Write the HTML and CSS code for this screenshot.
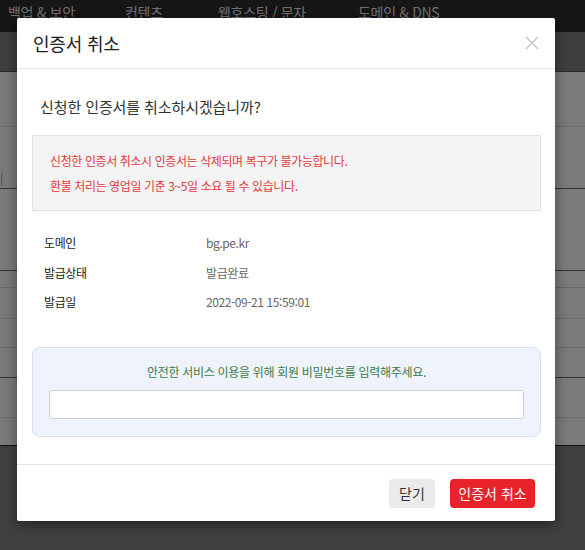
FILE: index.html
```html
<!DOCTYPE html>
<html lang="ko">
<head>
<meta charset="utf-8">
<title>인증서 취소</title>
<link rel="stylesheet" href="styles.css">
</head>
<body>
<div class="page">
  <nav class="topnav">
    <span class="nav-item n1">백업 &amp; 보안</span>
    <span class="nav-item n2">컨텐츠</span>
    <span class="nav-item n3">웹호스팅 / 문자</span>
    <span class="nav-item n4">도메인 &amp; DNS</span>
  </nav>
  <div class="subbar"></div>
  <div class="content">
    <div class="row r1"></div>
    <div class="row r2"><span class="pipe">|</span></div>
    <div class="row r3"></div>
    <div class="row r4"></div>
    <div class="row r5"></div>
    <div class="row r6"></div>
    <div class="row r7"></div>
    <div class="row r8"></div>
    <div class="row r9"></div>
  </div>
  <div class="footer-bg"></div>
</div>
<div class="backdrop"></div>
<div class="modal">
  <div class="modal-header">
    <h2 class="modal-title">인증서 취소</h2>
    <svg class="close" width="14" height="14" viewBox="0 0 14 14"><path d="M1 1L13 13M13 1L1 13" stroke="#c4c4c4" stroke-width="1.4" fill="none"/></svg>
  </div>
  <div class="modal-body">
    <p class="question">신청한 인증서를 취소하시겠습니까?</p>
    <div class="notice">
      <p>신청한 인증서 취소시 인증서는 삭제되며 복구가 불가능합니다.</p>
      <p>환불 처리는 영업일 기준 3~5일 소요 될 수 있습니다.</p>
    </div>
    <div class="info">
      <div class="info-row"><span class="label">도메인</span><span class="value">bg.pe.kr</span></div>
      <div class="info-row"><span class="label">발급상태</span><span class="value">발급완료</span></div>
      <div class="info-row"><span class="label">발급일</span><span class="value">2022-09-21 15:59:01</span></div>
    </div>
    <div class="pw-box">
      <p class="pw-text">안전한 서비스 이용을 위해 회원 비밀번호를 입력해주세요.</p>
      <input class="pw-input" type="password">
    </div>
  </div>
  <div class="modal-footer">
    <button class="btn btn-close">닫기</button>
    <button class="btn btn-danger">인증서 취소</button>
  </div>
</div>
</body>
</html>
```

FILE: styles.css
```css
* { box-sizing: border-box; }
html, body { margin: 0; padding: 0; }
body {
  width: 585px;
  height: 550px;
  overflow: hidden;
  position: relative;
  font-family: "Noto Sans CJK KR", "Noto Sans", sans-serif;
  background: #808080;
}
.page { display: flex; flex-direction: column; height: 550px; }
.topnav {
  height: 32px;
  background: #2c2c2c;
  position: relative;
  flex: none;
}
.nav-item {
  position: absolute;
  top: 0;
  font-size: 14px;
  line-height: 24px;
  color: #e0e0e0;
  letter-spacing: -0.3px;
}
.n1 { left: 8px; }
.n2 { left: 125px; }
.n3 { left: 218px; }
.n4 { left: 358px; }
.subbar {
  height: 40px;
  background: #7c7c7c;
  border-bottom: 1px solid #555;
  flex: none;
}
.content { background: #f6f6f6; flex: none; }
.row { border-bottom: 1px solid #d4d4d4; position: relative; }
.r1 { height: 55px; }
.r2 { height: 62px; border-bottom-color: #666; }
.r3 { height: 82px; border-bottom-color: #666; }
.r4 { height: 17px; }
.r5 { height: 31px; }
.r6 { height: 29px; }
.r7 { height: 30px; border-bottom-color: #666; }
.r8 { height: 40px; }
.r9 { height: 28px; border-bottom-color: #222; }
.pipe { position: absolute; left: 0; top: 42px; font-size: 12px; color: #999; }
.footer-bg { flex: 1; background: #808080; }
.backdrop {
  position: absolute;
  inset: 0;
  background: rgba(0, 0, 0, 0.5);
}
.modal {
  position: absolute;
  left: 17px;
  top: 18px;
  width: 538px;
  background: #fff;
  border-radius: 2px;
  box-shadow: 0 4px 14px rgba(0, 0, 0, 0.45);
}
.modal-header {
  height: 51px;
  padding: 0 16px;
  display: flex;
  align-items: center;
  justify-content: space-between;
  border-bottom: 1px solid #e5e5e5;
}
.modal-title {
  margin: 0;
  font-size: 18px;
  font-weight: 400;
  color: #222;
  line-height: 28px;
  letter-spacing: -0.2px;
}
.close { margin-right: 0; }
.modal-body { padding: 26px 14px 27px 15px; }
.question {
  margin: 0 0 16px 8px;
  font-size: 15px;
  line-height: 24px;
  color: #333;
  letter-spacing: -0.1px;
}
.notice {
  background: #f4f4f4;
  border: 1px solid #e3e3e3;
  padding: 12px 17px;
}
.notice p {
  margin: 0;
  font-size: 12px;
  line-height: 25px;
  color: #e8383d;
  letter-spacing: -0.4px;
}
.info { padding: 17px 12px 0; }
.info-row {
  display: flex;
  height: 29.5px;
  align-items: center;
  font-size: 12px;
  letter-spacing: -0.4px;
}
.label { width: 162px; flex: none; color: #222; }
.value { color: #666; }
.pw-box {
  margin-top: 30px;
  background: #eff3fd;
  border: 1px solid #d5e0f4;
  border-radius: 8px;
  padding: 15px 16px 17px;
  text-align: center;
}
.pw-text {
  margin: 0;
  font-size: 12px;
  line-height: 18px;
  color: #3b7c47;
  letter-spacing: -0.3px;
}
.pw-input {
  display: block;
  margin-top: 9px;
  width: 100%;
  height: 29px;
  border: 1px solid #cfcfcf;
  border-radius: 3px;
  background: #fff;
}
.modal-footer {
  border-top: 1px solid #e5e5e5;
  padding: 14px 20px 13px;
  display: flex;
  justify-content: flex-end;
  gap: 15px;
}
.btn {
  font-family: "Noto Sans CJK KR", "Noto Sans", sans-serif;
  font-size: 14px;
  height: 29px;
  border: none;
  border-radius: 4px;
  line-height: 29px;
  padding: 0;
}
.btn-close { background: #ebebeb; color: #333; width: 46px; }
.btn-danger { background: #e8222a; color: #fff; width: 85px; }
```
